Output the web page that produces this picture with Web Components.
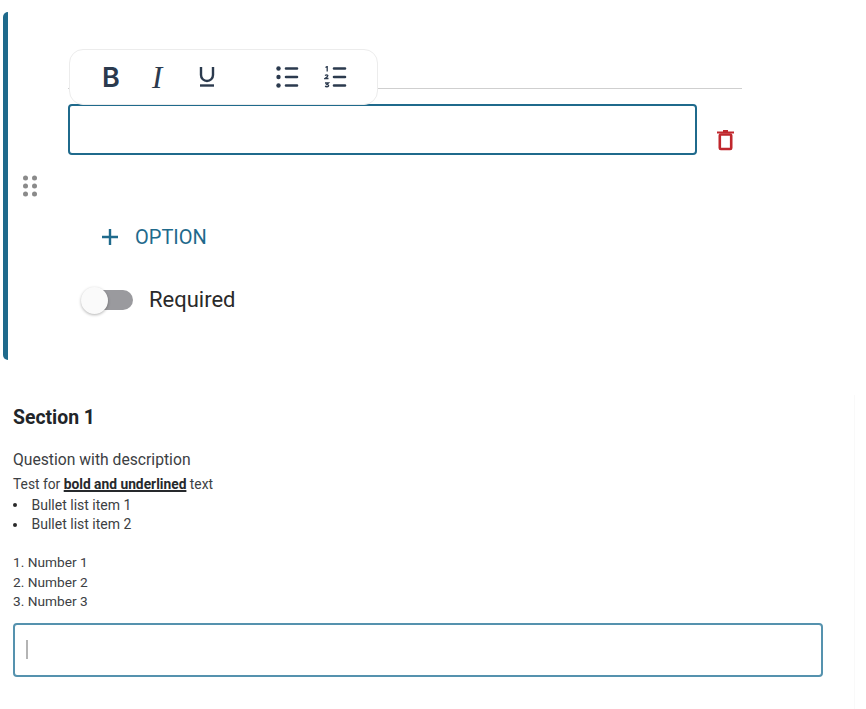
<!DOCTYPE html>
<html>
<head>
<meta charset="utf-8">
<title>Form editor</title>
<style>
  html, body { margin: 0; background: #fff; }
  body { font-family: Roboto, "Liberation Sans", sans-serif; height: 709px; overflow: hidden; }
  form-section p { font-size: 13.800px; }
  form-section b { text-decoration: underline; text-decoration-thickness: 1.500px; color: #26292c; }
  form-section ul { font-size: 14px; list-style: none; }
  form-section ul li::before {
    content: "";
    display: inline-block;
    width: 4px;
    height: 4px;
    margin: 0 14.500px 2.500px 0;
    border-radius: 50%;
    background: #2a2a2a;
  }
  form-section ol { font-size: 13.700px; }
</style>
</head>
<body>
<form-page>
  <question-card></question-card>
  <form-section heading="Section 1" label="Question with description">
    <p>Test for <b>bold and underlined</b> text</p>
    <ul>
      <li>Bullet list item 1</li>
      <li>Bullet list item 2</li>
    </ul>
    <br>
    <ol>
      <li>Number 1</li>
      <li>Number 2</li>
      <li>Number 3</li>
    </ol>
  </form-section>
</form-page>

<script>
class FormPage extends HTMLElement {
  constructor() {
    super();
    this.attachShadow({ mode: 'open' }).innerHTML = `
      <style>
        :host {
          display: block;
          width: 855px;
          height: 709px;
          padding-top: 12px;
          box-sizing: border-box;
        }
      </style>
      <slot></slot>
    `;
  }
}

class TextToolbar extends HTMLElement {
  constructor() {
    super();
    this.attachShadow({ mode: 'open' }).innerHTML = `
      <style>
        :host {
          position: absolute;
          left: 61px;
          top: 37px;
          width: 309px;
          height: 56px;
          box-sizing: border-box;
          display: block;
          background: #fff;
          border: 1px solid #ececec;
          border-radius: 14px;
          color: #2b3a4e;
        }
        .tools { display: flex; align-items: center; height: 100%; padding-left: 32px; }
        .b { font: 600 27px/1 Inter, "Liberation Sans", sans-serif; width: 50px; }
        .i { font: italic 400 31px/1 "Liberation Serif", serif; width: 47px; }
        svg { display: block; }
        .u { width: 77px; }
        .ul { width: 48px; }
      </style>
      <div class="tools">
        <span class="b">B</span>
        <span class="i">I</span>
        <span class="u">
          <svg width="16" height="20" viewBox="0 0 16 20" fill="none" stroke="#2b3a4e" stroke-width="2.400">
            <path d="M2 0v8a6 6 0 0 0 12 0V0"/>
            <path d="M1 18.500h14"/>
          </svg>
        </span>
        <span class="ul">
          <svg width="24" height="22" viewBox="0 0 24 22" fill="none" stroke="#2b3a4e" stroke-width="2.600" stroke-linecap="round">
            <circle cx="2.500" cy="2.500" r="2.200" fill="#2b3a4e" stroke="none"/>
            <circle cx="2.500" cy="11" r="2.200" fill="#2b3a4e" stroke="none"/>
            <circle cx="2.500" cy="19.500" r="2.200" fill="#2b3a4e" stroke="none"/>
            <path d="M10 2.500h11M10 11h11M10 19.500h11"/>
          </svg>
        </span>
        <span>
          <svg width="24" height="22" viewBox="0 0 24 22" fill="none" stroke="#2b3a4e" stroke-width="2.600" stroke-linecap="round">
            <path d="M10 2.500h11M10 11h11M10 19.500h11"/>
            <g stroke-width="1.300" stroke-linecap="butt">
              <path d="M1.500 1.500l1.700-1v5"/>
              <path d="M1 9.500q1.800-1.400 2.800 0q.3 1-2.800 3h3.500"/>
              <path d="M1 17h3.500l-1.700 1.500q2.200 0 1.700 1.500q-1 1.300-3.500 .4"/>
            </g>
          </svg>
        </span>
      </div>
    `;
  }
}

class QuestionCard extends HTMLElement {
  constructor() {
    super();
    this.attachShadow({ mode: 'open' }).innerHTML = `
      <style>
        :host {
          display: flex;
          align-items: center;
          position: relative;
          margin-left: 3px;
          width: 739px;
          height: 348px;
          box-sizing: border-box;
          border-left: 5px solid #1f6a8c;
          border-radius: 5px;
        }
        .handle {
          flex: none;
          width: 14px;
          margin: 0 31px 0 15px;
          display: block;
        }
        .body { flex: none; width: 674px; align-self: stretch; }
        .title { height: 77px; box-sizing: border-box; border-bottom: 1px solid #cfcfcf; }
        .row { display: flex; align-items: flex-start; margin-top: 15px; }
        .field {
          width: 629px;
          height: 51px;
          box-sizing: border-box;
          border: 2px solid #1f6a8c;
          border-radius: 4px;
        }
        .trash { margin: 26px 0 0 20px; display: block; }
        .option {
          display: flex;
          align-items: center;
          margin: 70px 0 0 34px;
          color: #1f6a8c;
          font-size: 20px;
          line-height: 24px;
        }
        .option svg { margin-right: 17px; display: block; }
        .required {
          display: flex;
          align-items: center;
          margin: 37px 0 0 13px;
          color: #2a2a2a;
          font-size: 22px;
          line-height: 28px;
        }
        .switch { position: relative; width: 52px; height: 27px; margin-right: 16px; }
        .track {
          position: absolute; left: 6px; right: 0; top: 3px; height: 20px;
          background: #9a9a9e; border-radius: 10px;
        }
        .thumb {
          position: absolute; left: 0; top: 0; width: 27px; height: 27px;
          background: #fafafa; border-radius: 50%;
          box-shadow: 0 1px 3px rgba(0,0,0,.3);
        }
      </style>
      <svg class="handle" width="14" height="22" viewBox="0 0 14 22" fill="#8a8a8a">
        <circle cx="2.500" cy="3" r="2.500"/><circle cx="11.500" cy="3" r="2.500"/>
        <circle cx="2.500" cy="11" r="2.500"/><circle cx="11.500" cy="11" r="2.500"/>
        <circle cx="2.500" cy="19" r="2.500"/><circle cx="11.500" cy="19" r="2.500"/>
      </svg>
      <div class="body">
        <div class="title"></div>
        <div class="row">
          <div class="field"></div>
          <svg class="trash" width="17" height="22" viewBox="0 0 17 22" fill="none" stroke="#c0272d">
            <path d="M0 2.500h17" stroke-width="2"/>
            <path d="M6 1h5" stroke-width="2"/>
            <rect x="2.800" y="4.500" width="11.400" height="14.500" rx="1" stroke-width="2.600"/>
          </svg>
        </div>
        <div class="option">
          <svg width="16" height="16" viewBox="0 0 16 16" stroke="#1f6a8c" stroke-width="2.400"><path d="M0 8h16M8 0v16"/></svg>
          <span>OPTION</span>
        </div>
        <div class="required">
          <div class="switch"><div class="track"></div><div class="thumb"></div></div>
          <span>Required</span>
        </div>
      </div>
      <text-toolbar></text-toolbar>
    `;
  }
}

class FormSection extends HTMLElement {
  constructor() {
    super();
    this.attachShadow({ mode: 'open' }).innerHTML = `
      <style>
        :host {
          display: block;
          margin-top: 35px;
          height: 314px;
          box-sizing: border-box;
          padding: 12px 31px 0 13px;
          border-right: 1px solid #f9f9f9;
          color: #3c4043;
        }
        h2 { margin: 0; font-size: 19.400px; line-height: 22px; font-weight: 700; color: #212529; }
        .label { margin-top: 20px; font-size: 15.700px; line-height: 22px; }
        .desc { margin-top: 4px; font-size: 14px; line-height: 19.500px; }
        ::slotted(p) { margin: 0; }
        ::slotted(ul) { margin: 1px 0 -1px; padding: 0; }
        ::slotted(ol) { margin: 0; padding: 0; list-style-position: inside; }
        .answer {
          margin-top: 11px;
          height: 54px;
          box-sizing: border-box;
          border: 2px solid #5592ae;
          border-radius: 4px;
          display: flex;
          align-items: center;
          padding-left: 11px;
        }
        .caret { width: 2px; height: 19px; background: #b4b4b4; }
      </style>
      <h2 id="heading"></h2>
      <div class="label" id="label"></div>
      <div class="desc"><slot></slot></div>
      <div class="answer"><div class="caret"></div></div>
    `;
  }

  connectedCallback() {
    this.shadowRoot.querySelector('#heading').textContent = this.getAttribute('heading');
    this.shadowRoot.querySelector('#label').textContent = this.getAttribute('label');
  }
}

customElements.define('form-page', FormPage);
customElements.define('text-toolbar', TextToolbar);
customElements.define('question-card', QuestionCard);
customElements.define('form-section', FormSection);
</script>
</body>
</html>
